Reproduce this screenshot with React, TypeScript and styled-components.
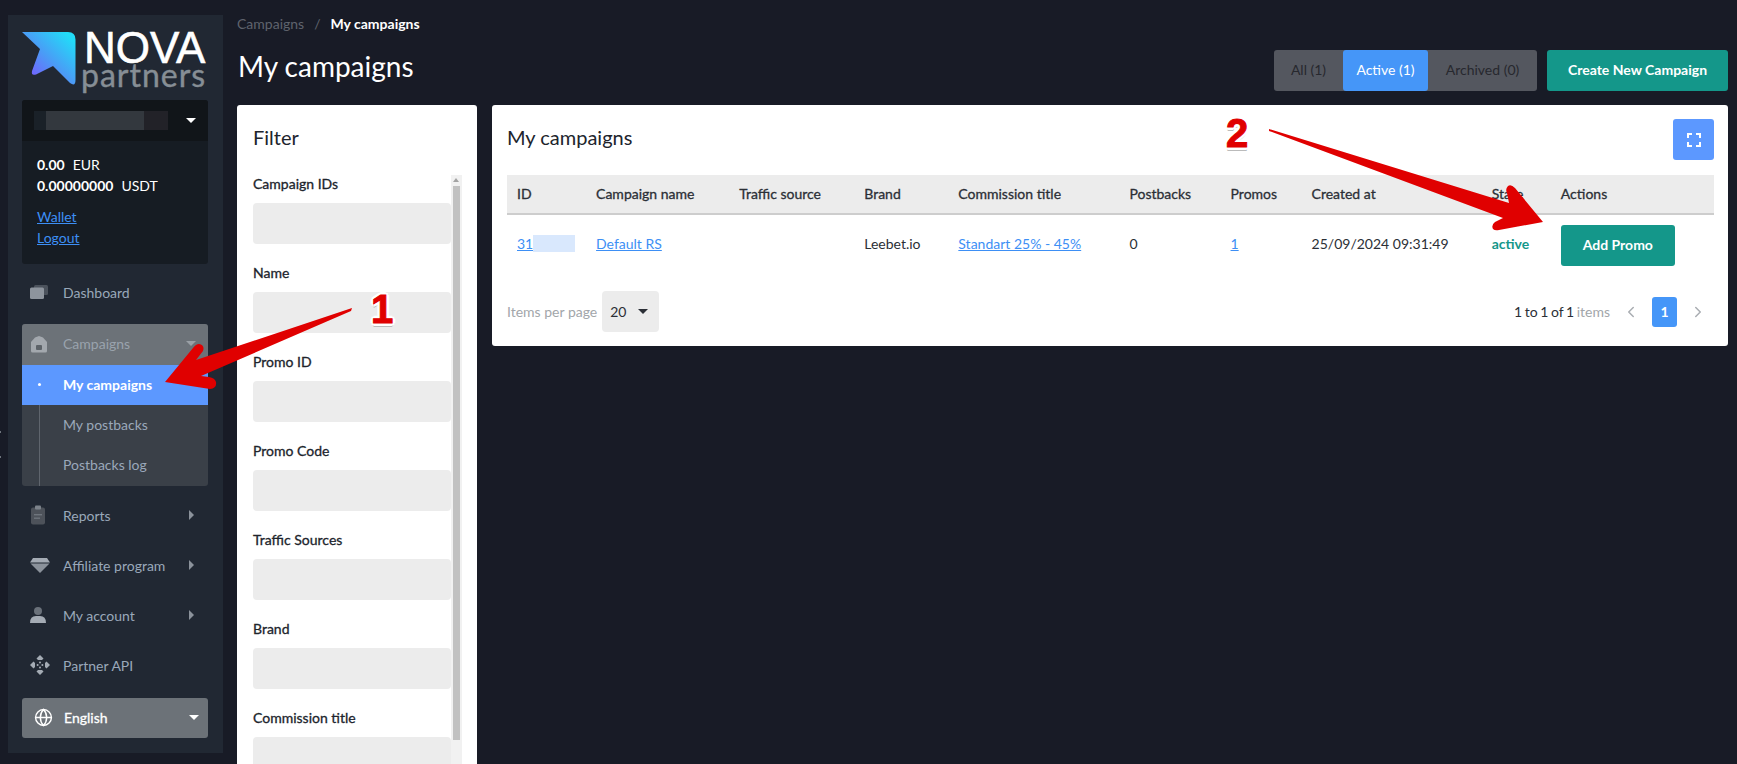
import React from "react";
import styled, { createGlobalStyle, css } from "styled-components";
import { Globe, ChevronLeft, ChevronRight } from "lucide-react";

const GlobalStyle = createGlobalStyle`
  html, body {
    margin: 0;
    height: 100%;
    overflow: hidden;
    background: #181b26;
  }
  body {
    font-family: "Lato", "Open Sans", sans-serif;
    font-size: 14px;
    color: #2b2f36;
  }
  * { box-sizing: border-box; }
  a { color: #3d8ff5; }
`;

// Lato has no medium weight, so labels get a hairline stroke instead
const medium = css`
  -webkit-text-stroke: 0.3px currentColor;
`;

const columns = [
  { title: "ID", width: 79 },
  { title: "Campaign name", width: 143 },
  { title: "Traffic source", width: 125 },
  { title: "Brand", width: 94 },
  { title: "Commission title", width: 171 },
  { title: "Postbacks", width: 101 },
  { title: "Promos", width: 81 },
  { title: "Created at", width: 180 },
  { title: "State", width: 69 },
  { title: "Actions", width: 163 },
];

const filterFields = [
  "Campaign IDs",
  "Name",
  "Promo ID",
  "Promo Code",
  "Traffic Sources",
  "Brand",
  "Commission title",
];

const IconDashboard = () => (
  <svg width="18" height="14" viewBox="0 0 18 14">
    <rect x="4" y="0" width="14" height="10" rx="1.5" fill="#4b525c" />
    <rect x="0" y="2.5" width="14" height="11.5" rx="1.5" fill="#8d949d" />
  </svg>
);
const IconHome = () => (
  <svg width="18" height="18" viewBox="0 0 18 18">
    <path d="M9 1 L13 2.5 L17 7 V16 Q17 17.5 15.5 17.5 H2.5 Q1 17.5 1 16 V7 L5 2.5 Z" fill="#a3a8ae" />
    <rect x="6" y="10" width="6" height="5" rx="1" fill="#5d6369" />
  </svg>
);
const IconClipboard = () => (
  <svg width="16" height="20" viewBox="0 0 16 20">
    <rect x="1" y="2.5" width="14" height="17" rx="2" fill="#4d525a" />
    <rect x="5" y="0.5" width="6" height="4" rx="1" fill="#7d838b" />
    <rect x="4" y="9" width="8" height="1.4" fill="#6f757d" />
    <rect x="4" y="12.5" width="6" height="1.4" fill="#6f757d" />
  </svg>
);
const IconDiamond = () => (
  <svg width="20" height="15" viewBox="0 0 20 15">
    <path d="M3 0 H17 L20 4.5 H0 Z" fill="#a4abb4" />
    <path d="M0.5 5.5 H19.5 L10 15 Z" fill="#8b929b" />
  </svg>
);
const IconUser = () => (
  <svg width="16" height="16" viewBox="0 0 16 16">
    <circle cx="8" cy="4" r="4" fill="#6a717a" />
    <path d="M0 16 Q0 9 6 9 H10 Q16 9 16 16 Z" fill="#a4abb4" />
  </svg>
);
const IconApi = () => (
  <svg width="20" height="20" viewBox="0 0 20 20" fill="#a4abb4">
    <path d="M10 0 L13.5 3.5 L12 5 H8 L6.5 3.5 Z" />
    <path d="M10 20 L13.5 16.5 L12 15 H8 L6.5 16.5 Z" />
    <path d="M0 10 L3.5 6.5 L5 8 V12 L3.5 13.5 Z" />
    <path d="M20 10 L16.5 6.5 L15 8 V12 L16.5 13.5 Z" />
    <circle cx="10" cy="7.6" r="1" />
    <circle cx="10" cy="12.4" r="1" />
    <circle cx="7.6" cy="10" r="1" />
    <circle cx="12.4" cy="10" r="1" />
  </svg>
);

export default function App() {
  return (
    <>
      <GlobalStyle />
      <Page>
        <Sidebar>
          <Logo>
            <svg width="56" height="56" viewBox="22 32 56 56">
              <defs>
                <linearGradient id="logoFill" x1="0.1" y1="0.9" x2="0.9" y2="0.1">
                  <stop offset="0" stopColor="#7b55ff" />
                  <stop offset="0.5" stopColor="#4a9cf6" />
                  <stop offset="1" stopColor="#22dcf8" />
                </linearGradient>
              </defs>
              <path
                d="M22 32 L68 32 Q75.5 32 75.5 39.5 L75.5 80 Q75.5 87 70 83 L53 66 L36 74.5 Q31 76 32 71 L40 49 Z"
                fill="url(#logoFill)"
              />
            </svg>
            <LogoText>
              <LogoNova>NOVA</LogoNova>
              <LogoPartners>partners</LogoPartners>
            </LogoText>
          </Logo>

          <Account>
            <AccountHead>
              <Redacted />
              <Caret $color="#fff" />
            </AccountHead>
            <AccountBody>
              <Balance><b>0.00</b>EUR</Balance>
              <Balance><b>0.00000000</b>USDT</Balance>
              <AccountLinks>
                <a href="#wallet">Wallet</a>
                <a href="#logout">Logout</a>
              </AccountLinks>
            </AccountBody>
          </Account>

          <NavItem>
            <NavIcon><IconDashboard /></NavIcon>
            Dashboard
          </NavItem>

          <NavGroup>
            <NavGroupHead>
              <NavIcon><IconHome /></NavIcon>
              Campaigns
              <Caret $color="#9aa0a6" />
            </NavGroupHead>
            <SubItem $active>My campaigns</SubItem>
            <SubItem>My postbacks</SubItem>
            <SubItem>Postbacks log</SubItem>
          </NavGroup>

          <NavItem>
            <NavIcon><IconClipboard /></NavIcon>
            Reports
            <CaretRight />
          </NavItem>
          <NavItem>
            <NavIcon><IconDiamond /></NavIcon>
            Affiliate program
            <CaretRight />
          </NavItem>
          <NavItem>
            <NavIcon><IconUser /></NavIcon>
            My account
            <CaretRight />
          </NavItem>
          <NavItem>
            <NavIcon><IconApi /></NavIcon>
            Partner API
          </NavItem>

          <Language>
            <Globe size={19} color="#fff" strokeWidth={1.8} />
            English
            <Caret $color="#fff" />
          </Language>
        </Sidebar>

        <Main>
          <Breadcrumb>
            <span>Campaigns</span>
            <Slash>/</Slash>
            <b>My campaigns</b>
          </Breadcrumb>

          <TopRow>
            <PageTitle>My campaigns</PageTitle>
            <TopActions>
              <Segments>
                <Segment $width={69}>All (1)</Segment>
                <Segment $width={85} $active>Active (1)</Segment>
                <Segment $width={109}>Archived (0)</Segment>
              </Segments>
              <TealButton $width={181}>Create New Campaign</TealButton>
            </TopActions>
          </TopRow>

          <Content>
            <FilterCard>
              <CardTitle>Filter</CardTitle>
              <FilterBody>
                <FilterFields>
                  {filterFields.map((label) => (
                    <Field key={label}>
                      <FieldLabel>{label}</FieldLabel>
                      <FieldInput />
                    </Field>
                  ))}
                </FilterFields>
                <ScrollTrack>
                  <ScrollUp />
                  <ScrollThumb />
                </ScrollTrack>
              </FilterBody>
            </FilterCard>

            <TableCard>
              <TableHead>
                <CardTitle>My campaigns</CardTitle>
                <ExpandButton>
                  <svg width="14" height="14" viewBox="0 0 14 14" fill="none" stroke="#fff" strokeWidth="2">
                    <path d="M1 5 V1 H5 M9 1 H13 V5 M13 9 V13 H9 M5 13 H1 V9" />
                  </svg>
                </ExpandButton>
              </TableHead>

              <Table>
                <colgroup>
                  {columns.map((c) => (
                    <col key={c.title} style={{ width: c.width }} />
                  ))}
                </colgroup>
                <thead>
                  <tr>
                    {columns.map((c) => (
                      <th key={c.title}>{c.title}</th>
                    ))}
                  </tr>
                </thead>
                <tbody>
                  <tr>
                    <td><IdCell><a href="#id">31</a><IdBlur /></IdCell></td>
                    <td><a href="#campaign">Default RS</a></td>
                    <td></td>
                    <td>Leebet.io</td>
                    <td><a href="#commission">Standart 25% - 45%</a></td>
                    <td>0</td>
                    <td><a href="#promos">1</a></td>
                    <td>25/09/2024 09:31:49</td>
                    <td><StateText>active</StateText></td>
                    <td><TealButton $width={114}>Add Promo</TealButton></td>
                  </tr>
                </tbody>
              </Table>

              <TableFooter>
                <PerPage>
                  <MutedText>Items per page</MutedText>
                  <PerPageSelect>
                    20
                    <Caret $color="#2b2f36" />
                  </PerPageSelect>
                </PerPage>
                <Pager>
                  <PagerText>1 to 1 of 1 <MutedText>items</MutedText></PagerText>
                  <ChevronLeft size={18} color="#a9adb2" />
                  <PageNumber>1</PageNumber>
                  <ChevronRight size={18} color="#a9adb2" />
                </Pager>
              </TableFooter>
            </TableCard>
          </Content>
        </Main>

        <ResizeDots />

        <ArrowLayer width="1737" height="764" viewBox="0 0 1737 764">
          <path
            d="M352 308 L196 360 L203 351 Q205 345 199 344 Q196 344 193 348 L165 382 L210 389 Q217 388 216 382 Q215 378 209 377 L201 376 L351 311 Z"
            fill="#e00000"
          />
          <path
            d="M1269 129 L1269 131 L1503 218 L1495 222 Q1491 225 1493 229 Q1495 231 1499 230 L1543 222 L1515 188 Q1511 184 1508 186 Q1505 189 1507 193 L1509 203 Z"
            fill="#e00000"
          />
        </ArrowLayer>
        <StepNumber $x={371} $y={289}>1</StepNumber>
        <StepNumber $x={1226} $y={113}>2</StepNumber>
      </Page>
    </>
  );
}

const Page = styled.div`
  position: relative;
  display: flex;
  align-items: flex-start;
  height: 764px;
  overflow: hidden;
  padding: 15px 9px 0 8px;
`;

const Sidebar = styled.aside`
  flex: 0 0 215px;
  height: 738px;
  background: #212833;
  padding: 17px 15px 0 14px;
  display: flex;
  flex-direction: column;
`;

const Logo = styled.div`
  display: flex;
  align-items: flex-start;
  gap: 6px;
  height: 68px;
`;

const LogoText = styled.div`
  display: flex;
  flex-direction: column;
`;

const LogoNova = styled.div`
  font-family: "Liberation Sans", sans-serif;
  font-size: 44px;
  line-height: 32px;
  color: #fff;
  -webkit-text-stroke: 0.6px #fff;
`;

const LogoPartners = styled.div`
  font-family: "Lato", sans-serif;
  font-size: 32px;
  line-height: 22px;
  letter-spacing: 1px;
  margin-left: -3px;
  color: #868e95;
  -webkit-text-stroke: 0.4px #868e95;
`;

const Account = styled.div`
  background: #161c23;
  border-radius: 3px;
  overflow: hidden;
  height: 164px;
  flex: none;
  margin-bottom: 4px;
`;

const AccountHead = styled.div`
  height: 41px;
  background: #111519;
  display: flex;
  align-items: center;
  justify-content: space-between;
  padding: 0 12px;
`;

const Redacted = styled.div`
  width: 134px;
  height: 19px;
  background: linear-gradient(90deg, #1a2128 0 9%, #33383e 9% 82%, #222228 82% 100%);
`;

const Caret = styled.i<{ $color: string }>`
  flex: none;
  margin-left: auto;
  width: 0;
  height: 0;
  border-left: 5px solid transparent;
  border-right: 5px solid transparent;
  border-top: 5px solid ${(p) => p.$color};
`;

const CaretRight = styled.i`
  margin-left: auto;
  margin-right: 14px;
  width: 0;
  height: 0;
  border-top: 5px solid transparent;
  border-bottom: 5px solid transparent;
  border-left: 5px solid #8b929b;
`;

const AccountBody = styled.div`
  padding: 13px 15px;
  color: #fff;
`;

const Balance = styled.div`
  line-height: 21px;
  b {
    font-weight: 700;
    margin-right: 8px;
  }
`;

const AccountLinks = styled.div`
  display: flex;
  flex-direction: column;
  align-items: flex-start;
  margin-top: 10px;
  a {
    line-height: 21px;
  }
`;

const NavItem = styled.div`
  flex: none;
  height: 50px;
  padding-bottom: 2px;
  display: flex;
  align-items: center;
  color: #9aa8ba;
`;

const NavIcon = styled.span`
  flex: none;
  width: 41px;
  padding-left: 8px;
  display: flex;
  align-items: center;
`;

const NavGroup = styled.div`
  flex: none;
  margin: 6px 0 5px;
  border-radius: 3px;
  overflow: hidden;
  background: #3a4048;
`;

const NavGroupHead = styled.div`
  height: 41px;
  background: #6c7278;
  display: flex;
  align-items: center;
  padding: 0 12px 2px 0;
  color: #9aa3ad;
`;

const SubItem = styled.div<{ $active?: boolean }>`
  position: relative;
  height: ${(p) => (p.$active ? "40px" : "40.5px")};
  padding: 0 0 2px 41px;
  display: flex;
  align-items: center;
  background: ${(p) => (p.$active ? "#5c98ff" : "transparent")};
  color: ${(p) => (p.$active ? "#fff" : "#9aa8ba")};
  font-weight: ${(p) => (p.$active ? 700 : 400)};
  &::before {
    content: "";
    position: absolute;
    left: ${(p) => (p.$active ? "16px" : "17px")};
    top: ${(p) => (p.$active ? "18px" : "0")};
    width: ${(p) => (p.$active ? "3px" : "1px")};
    height: ${(p) => (p.$active ? "3px" : "100%")};
    border-radius: ${(p) => (p.$active ? "50%" : "0")};
    background: ${(p) => (p.$active ? "#fff" : "#5f656d")};
  }
`;

const Language = styled.div`
  flex: none;
  margin-top: 7px;
  height: 40px;
  background: #6c7278;
  border-radius: 3px;
  display: flex;
  align-items: center;
  gap: 11px;
  padding: 0 9px 2px 12px;
  color: #fff;
  ${medium}
`;

const Main = styled.main`
  flex: 1;
  min-width: 0;
  padding-left: 14px;
`;

const Breadcrumb = styled.div`
  height: 18px;
  line-height: 18px;
  color: #5f636d;
  display: flex;
  b {
    color: #fff;
    font-weight: 700;
  }
`;

const Slash = styled.span`
  margin: 0 10px;
`;

const TopRow = styled.div`
  margin-top: 17px;
  display: flex;
  justify-content: space-between;
  align-items: flex-start;
`;

const PageTitle = styled.h1`
  margin: 0 0 0 1px;
  font-size: 28px;
  font-weight: 400;
  line-height: 33px;
  color: #fff;
`;

const TopActions = styled.div`
  display: flex;
  gap: 10px;
`;

const Segments = styled.div`
  display: flex;
  height: 41px;
  background: #54575f;
  border-radius: 3px;
`;

const Segment = styled.div<{ $width: number; $active?: boolean }>`
  width: ${(p) => p.$width}px;
  display: flex;
  align-items: center;
  justify-content: center;
  padding-bottom: 2px;
  border-radius: 3px;
  background: ${(p) => (p.$active ? "#4596f8" : "transparent")};
  color: ${(p) => (p.$active ? "#fff" : "#27282e")};
`;

const TealButton = styled.button<{ $width: number }>`
  width: ${(p) => p.$width}px;
  height: 41px;
  border: 0;
  border-radius: 3px;
  background: #14978a;
  color: #fff;
  font: 700 14px "Lato", sans-serif;
  padding: 0 0 2px;
`;

const Content = styled.div`
  margin-top: 14px;
  display: flex;
  align-items: flex-start;
  gap: 15px;
`;

const FilterCard = styled.section`
  flex: 0 0 240px;
  height: 720px;
  background: #fff;
  border-radius: 3px;
  padding: 14px 15px 0 16px;
`;

const CardTitle = styled.h2`
  margin: 0;
  height: 41px;
  line-height: 36px;
  font-size: 20px;
  font-weight: 400;
  color: #20242c;
`;

const FilterBody = styled.div`
  margin-top: 15px;
  display: flex;
`;

const FilterFields = styled.div`
  flex: 1;
  min-width: 0;
`;

const ScrollTrack = styled.div`
  position: relative;
  flex: 0 0 11px;
  background: #f1f1f1;
  padding-top: 11px;
`;

const ScrollUp = styled.i`
  position: absolute;
  left: 2px;
  top: 3px;
  width: 0;
  height: 0;
  border-left: 3.5px solid transparent;
  border-right: 3.5px solid transparent;
  border-bottom: 4px solid #a3a3a3;
`;

const ScrollThumb = styled.div`
  width: 7px;
  margin-left: 2px;
  height: 554px;
  background: #c1c1c1;
`;

const Field = styled.div`
  height: 89px;
`;

const FieldLabel = styled.div`
  height: 20px;
  line-height: 18px;
  margin-bottom: 8px;
  color: #20242c;
  ${medium}
`;

const FieldInput = styled.div`
  height: 41px;
  background: #ececec;
  border-radius: 4px;
`;

const TableCard = styled.section`
  flex: 1;
  min-width: 0;
  height: 241px;
  background: #fff;
  border-radius: 3px;
  padding: 14px 14px 13px 15px;
`;

const TableHead = styled.div`
  display: flex;
  justify-content: space-between;
  align-items: center;
`;

const ExpandButton = styled.button`
  width: 41px;
  height: 41px;
  border: 0;
  border-radius: 3px;
  background: #5c98ff;
  display: flex;
  align-items: center;
  justify-content: center;
`;

const Table = styled.table`
  margin-top: 15px;
  width: 100%;
  table-layout: fixed;
  border-collapse: collapse;
  th {
    height: 39px;
    padding: 0 10px 2px;
    text-align: left;
    font-weight: 400;
    color: #2b2f36;
    background: #ececec;
    border-bottom: 2px solid #cdcdcd;
    white-space: nowrap;
    ${medium}
  }
  td {
    height: 61px;
    padding: 0 10px 3px;
    white-space: nowrap;
  }
  td:last-child {
    padding-bottom: 0;
  }
`;

const IdCell = styled.span`
  display: inline-flex;
  align-items: center;
`;

const IdBlur = styled.span`
  width: 42px;
  height: 17px;
  background: #d9e8fd;
`;

const StateText = styled.span`
  color: #14978a;
  font-weight: 700;
`;

const TableFooter = styled.div`
  margin-top: 16px;
  display: flex;
  justify-content: space-between;
  align-items: center;
`;

const PerPage = styled.div`
  display: flex;
  align-items: center;
  gap: 5px;
`;

const MutedText = styled.span`
  color: #a2a6aa;
`;

const PerPageSelect = styled.div`
  width: 57px;
  height: 41px;
  background: #ececec;
  border-radius: 4px;
  display: flex;
  align-items: center;
  padding: 0 11px 0 8px;
  color: #2b2f36;
`;

const Pager = styled.div`
  display: flex;
  align-items: center;
  gap: 12px;
  padding-right: 7px;
`;

const PagerText = styled.span`
  word-spacing: -1px;
`;

const PageNumber = styled.div`
  width: 25px;
  height: 30px;
  border-radius: 3px;
  background: #4596f8;
  color: #fff;
  font-weight: 700;
  display: flex;
  align-items: center;
  justify-content: center;
`;

const ResizeDots = styled.div`
  position: absolute;
  left: 0;
  top: 431px;
  width: 1px;
  height: 27px;
  border-top: 2px solid #6f757d;
  border-bottom: 2px solid #6f757d;
`;

const ArrowLayer = styled.svg`
  position: absolute;
  left: 0;
  top: 0;
  pointer-events: none;
`;

const StepNumber = styled.span<{ $x: number; $y: number }>`
  position: absolute;
  left: ${(p) => p.$x}px;
  top: ${(p) => p.$y}px;
  font: 700 40px/40px "Liberation Sans", sans-serif;
  color: #e00000;
  -webkit-text-stroke: 1px #e00000;
  text-shadow:
    -3px 0 #fff, 3px 0 #fff, 0 -3px #fff, 0 3px #fff,
    -2px -2px #fff, 2px -2px #fff, -2px 2px #fff, 2px 2px #fff,
    0 4px #bbb;
`;
